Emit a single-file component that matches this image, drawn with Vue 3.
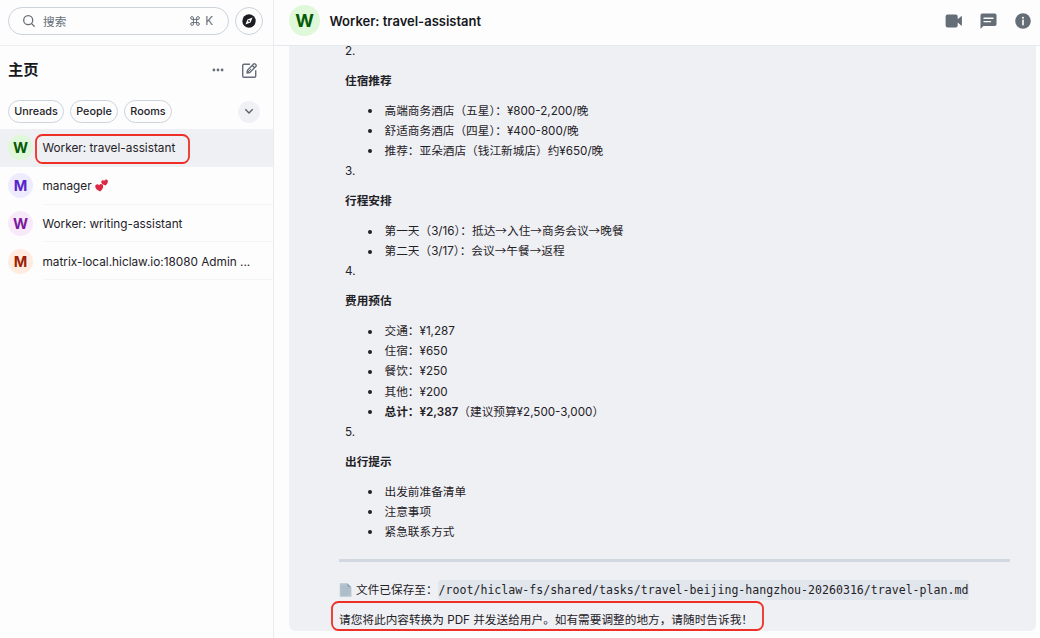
<script setup>
const filters = [
  { label: 'Unreads', width: 56 },
  { label: 'People', width: 48 },
  { label: 'Rooms', width: 48 },
]
const rooms = [
  { letter: 'W', name: 'Worker: travel-assistant', tone: 'green', active: true },
  { letter: 'M', name: 'manager', tone: 'violet', hearts: true },
  { letter: 'W', name: 'Worker: writing-assistant', tone: 'purple' },
  { letter: 'M', name: 'matrix-local.hiclaw.io:18080 Admin ...', tone: 'orange' },
]
const sections = [
  { n: '2.', title: '住宿推荐', items: [
    { text: '高端商务酒店（五星）：¥800-2,200/晚' },
    { text: '舒适商务酒店（四星）：¥400-800/晚' },
    { text: '推荐：亚朵酒店（钱江新城店）约¥650/晚' },
  ] },
  { n: '3.', title: '行程安排', items: [
    { text: '第一天（3/16）：抵达→入住→商务会议→晚餐' },
    { text: '第二天（3/17）：会议→午餐→返程' },
  ] },
  { n: '4.', title: '费用预估', items: [
    { text: '交通：¥1,287' },
    { text: '住宿：¥650' },
    { text: '餐饮：¥250' },
    { text: '其他：¥200' },
    { strong: '总计：¥2,387', text: '（建议预算¥2,500-3,000）' },
  ] },
  { n: '5.', title: '出行提示', items: [
    { text: '出发前准备清单' },
    { text: '注意事项' },
    { text: '紧急联系方式' },
  ] },
]
const splitArrows = (s) => s.split(/(→)/)
</script>

<template>
  <div class="app">
    <aside class="side">
      <div class="search-row">
        <div class="search">
          <svg width="14" height="14" viewBox="0 0 14 14" fill="none" stroke="#656d77" stroke-width="1.3" stroke-linecap="round"><circle cx="6.2" cy="6.2" r="4.5" /><path d="M9.6 9.6 12.2 12.2" /></svg>
          <span class="ph">搜索</span>
          <span class="keys"><svg width="10" height="10" viewBox="0 0 10 10" fill="none" stroke="#656d77" stroke-width="1"><path d="M3.4 3.4V2.2A1.4 1.4 0 1 0 2 3.4H8A1.4 1.4 0 1 0 6.6 2.2V7.8A1.4 1.4 0 1 0 8 6.6H2A1.4 1.4 0 1 0 3.4 7.8Z" /></svg>K</span>
        </div>
        <div class="explore">
          <svg width="14" height="14" viewBox="0 0 14 14"><circle cx="7" cy="7" r="6.7" fill="#1b1d22" /><path d="M10.6 3.4 8.5 8.5 3.4 10.6 5.5 5.5Z" fill="#fff" /><circle cx="7" cy="7" r=".9" fill="#1b1d22" /></svg>
        </div>
      </div>
      <div class="home-row">
        <h1>主页</h1>
        <svg class="dots" width="12" height="4" viewBox="0 0 12 4" fill="#656d77"><circle cx="1.9" cy="2" r="1.4" /><circle cx="6" cy="2" r="1.4" /><circle cx="10.1" cy="2" r="1.4" /></svg>
        <svg width="17" height="17" viewBox="0 0 17 17" fill="none" stroke="#656d77" stroke-width="1.4" stroke-linejoin="round"><path d="M9 2.2H3Q1.7 2.2 1.7 3.5V14Q1.7 15.3 3 15.3H13.4Q14.7 15.3 14.7 14V8.3" /><path d="M6 11 6.5 8.2 12.5 2.1Q13.4 1.3 14.4 2.2L14.8 2.6Q15.7 3.6 14.8 4.5L8.8 10.5ZM11.3 3.5 13.5 5.7" /><path d="M6.5 10.5 10 7" stroke-width="1" /></svg>
      </div>
      <div class="filters">
        <span v-for="f in filters" :key="f.label" class="chip" :style="{ width: f.width + 'px' }">{{ f.label }}</span>
        <span class="expand"><svg width="10" height="7" viewBox="0 0 10 7" fill="none" stroke="#5a626c" stroke-width="1.4"><path d="M1.3 1.3 5 5 8.7 1.3" /></svg></span>
      </div>
      <div class="rooms">
        <div v-for="r in rooms" :key="r.name" class="room" :class="{ active: r.active }">
          <span class="avatar" :class="r.tone">{{ r.letter }}</span>
          <div class="name">
            <span>{{ r.name }}</span>
            <svg v-if="r.hearts" width="13" height="13" viewBox="0 0 13 13" fill="#dc2844"><path d="M5.2 12.4C2.6 11.8.3 9.800.2 7.600.1 5.300 2.900 4.400 4.200 6.200 5.200 4.200 8 4.700 8.200 7 8.300 9 7 11 5.200 12.400Z" /><path d="M10.600 6.400C8.500 6.100 6.500 4.900 6.300 3.200 6.200 1.300 8.200.8 9.300 2 9.700.3 12 0 12.700 1.500 13.300 3.100 12.200 5.100 10.600 6.400Z" /></svg>
          </div>
          <svg v-if="r.active" class="mark room-mark" width="155" height="30"><rect x="1" y="1" width="153" height="28" rx="6.500" /></svg>
        </div>
      </div>
    </aside>

    <main class="main">
      <header class="head">
        <span class="avatar big green">W</span>
        <span class="title">Worker: travel-assistant</span>
        <div class="actions">
          <svg width="18" height="14" viewBox="0 0 18 14" fill="#656d77"><path d="M2.600.6H10.700Q12.700.6 12.700 2.600V5.300L16.200 2.200Q16.900 1.800 16.900 2.600V11.200Q16.900 12 16.200 11.500L12.700 8.500V11.400Q12.700 13.400 10.700 13.400H2.600Q.6 13.400.6 11.400V2.600Q.6.6 2.600.6Z" /></svg>
          <svg width="17" height="16" viewBox="0 0 17 16"><path d="M2.200.5H14.800Q16.500.5 16.500 2.200V11.300Q16.500 13 14.800 13H3.300L1.300 15.200Q.5 15.800.5 14.800V2.200Q.5.5 2.200.5Z" fill="#656d77" /><path d="M4 5.200H13M4 8.600H10.500" stroke="#fff" stroke-width="1.400" stroke-linecap="round" /></svg>
          <svg width="16" height="16" viewBox="0 0 16 16"><circle cx="8" cy="8" r="7.800" fill="#656d77" /><circle cx="8" cy="4.700" r="1" fill="#fff" /><path d="M8 7.300V11.700" stroke="#fff" stroke-width="1.600" stroke-linecap="round" /></svg>
        </div>
      </header>
      <div class="timeline">
        <div class="bubble">
          <section v-for="s in sections" :key="s.n" class="sec">
            <div class="line">{{ s.n }}</div>
            <div class="line sec-title">{{ s.title }}</div>
            <ul>
              <li v-for="(it, i) in s.items" :key="i">
                <strong v-if="it.strong">{{ it.strong }}</strong><template v-for="(p, j) in splitArrows(it.text)" :key="j"><span v-if="p === '→'" class="arrow">→</span><template v-else>{{ p }}</template></template>
              </li>
            </ul>
          </section>
          <div class="rule"></div>
          <div class="line saved">
            <svg width="13" height="14" viewBox="0 0 13 14"><path d="M.8.3H8.300L12.400 4.300V13.800H.8Z" fill="#b4c4cf" /><path d="M8.300.3V4.300H12.400Z" fill="#8fa5b3" /><path d="M2.300 3.500H6.500M2.300 5.800H10.500M2.300 8H10.500M2.300 10.200H10.500M2.300 12H8" stroke="#a0b3bf" stroke-width=".7" /></svg>
            <span class="saved-label">文件已保存至：</span>
            <code>/root/hiclaw-fs/shared/tasks/travel-beijing-hangzhou-20260316/travel-plan.md</code>
          </div>
          <div class="line closing">请您将此内容转换为 PDF 并发送给用户。如有需要调整的地方，请随时告诉我！<svg class="mark closing-mark" width="433" height="30"><rect x="1" y="1" width="431" height="28" rx="6.500" /></svg></div>
        </div>
      </div>
    </main>
  </div>
</template>

<style>
body { background: #fdfdfe; }
</style>

<style scoped>
* { box-sizing: border-box; }
.app {
  display: flex;
  width: 1040px;
  height: 638px;
  overflow: hidden;
  background: #fdfdfe;
  color: #1f2227;
  font-family: Inter, "Noto Sans CJK SC", sans-serif;
  font-size: 11.67px;
}
svg { display: block; flex: none; }
.side { width: 274px; flex: none; border-right: 1px solid #e9ebf0; }
.search-row {
  display: flex;
  align-items: flex-start;
  gap: 6px;
  height: 46px;
  padding: 7px 0 0 8px;
  border-bottom: 1px solid #eceef2;
}
.search {
  display: flex;
  align-items: center;
  width: 221px;
  height: 28px;
  padding: 0 15px 1px 13px;
  border: 1px solid #ccd3db;
  border-radius: 14px;
  color: #656d77;
}
.ph { margin-left: 7px; }
.keys { display: flex; align-items: center; gap: 5px; margin-left: auto; }
.explore {
  display: grid;
  place-items: center;
  width: 28px;
  height: 28px;
  border: 1px solid #ccd3db;
  border-radius: 50%;
}
.home-row { display: flex; align-items: center; height: 48px; padding: 0 15px 0 8px; }
h1 { margin: 0; font-size: 15.3px; font-weight: 600; line-height: 20px; color: #16181c; }
.dots { margin: 0 17px 0 auto; }
.filters { display: flex; align-items: center; gap: 6px; height: 35px; padding: 0 13px 0 8px; }
.chip {
  display: grid;
  place-items: center;
  height: 23px;
  border: 1px solid #ccd3db;
  border-radius: 12px;
  font-size: 10.8px;
  font-weight: 500;
}
.expand {
  display: grid;
  place-items: center;
  width: 22px;
  height: 22px;
  margin-left: auto;
  border-radius: 50%;
  background: #eff1f5;
}
.room { position: relative; display: flex; align-items: center; height: 37.8px; padding-left: 8px; }
.room.active { background: #eff0f4; }
.avatar {
  display: grid;
  place-items: center;
  flex: none;
  width: 25px;
  height: 25px;
  border-radius: 50%;
  font-size: 14.5px;
  font-weight: 700;
}
.avatar.big { width: 31px; height: 31px; font-size: 18px; }
.green { background: #dff8d9; color: #055a05; }
.violet { background: #eeebff; color: #5624c9; }
.purple { background: #f8e9fa; color: #7c1a9b; }
.orange { background: #ffebe0; color: #9b1f05; }
.name {
  display: flex;
  align-items: center;
  gap: 3px;
  flex: 1;
  height: 100%;
  margin-left: 9.500px;
  padding-top: 1.500px;
  border-bottom: 1px solid #f3f4f7;
  font-size: 11.800px;
}
.active .name { border-color: transparent; }
.mark { position: absolute; fill: none; stroke: #ee2f27; stroke-width: 1.800px; }
.room-mark { left: 34.500px; top: 4.500px; }

.main { display: flex; flex-direction: column; flex: 1; min-width: 0; }
.head {
  display: flex;
  align-items: center;
  flex: none;
  height: 46px;
  padding: 0 9.500px 4px 15px;
  border-bottom: 1px solid #e6e9ee;
}
.title { margin-left: 9.500px; padding-top: 1px; font-size: 13px; font-weight: 600; color: #16181c; }
.actions { display: flex; align-items: center; gap: 17.500px; margin-left: auto; }
.timeline {
  display: flex;
  flex-direction: column;
  justify-content: flex-end;
  flex: 1;
  min-height: 0;
  overflow: hidden;
  padding: 0 4px 7px 15px;
}
.bubble {
  flex: none;
  padding: 0 26px 1px 50px;
  border-radius: 0 0 7px 7px;
  background: #eff0f4;
  line-height: 20.07px;
}
.line { height: 20.07px; white-space: nowrap; }
.sec { padding-left: 6px; }
.sec-title { margin: 10px 0; font-weight: 600; }
ul { margin: 0; padding: 0; list-style: none; }
li { position: relative; height: 20.07px; padding-left: 39.500px; white-space: nowrap; }
li::before {
  content: "";
  position: absolute;
  left: 23px;
  top: 8.500px;
  width: 4px;
  height: 4px;
  border-radius: 50%;
  background: #1f2227;
}
strong { font-weight: 600; }
.arrow { font-family: "Noto Sans CJK SC", sans-serif; line-height: 1; }
.rule { height: 3px; margin: 17px 0 17.900px; background: #d1d8df; }
.saved { display: flex; align-items: center; }
.saved-label { margin-left: 4px; }
code {
  height: 20px;
  padding: 0 1px;
  border-radius: 3px;
  background: #e1e6ec;
  font: 11.580px/20px "DejaVu Sans Mono", monospace;
}
.closing { position: relative; margin-top: 10px; }
.closing-mark { left: -8px; top: -8.500px; }
</style>
